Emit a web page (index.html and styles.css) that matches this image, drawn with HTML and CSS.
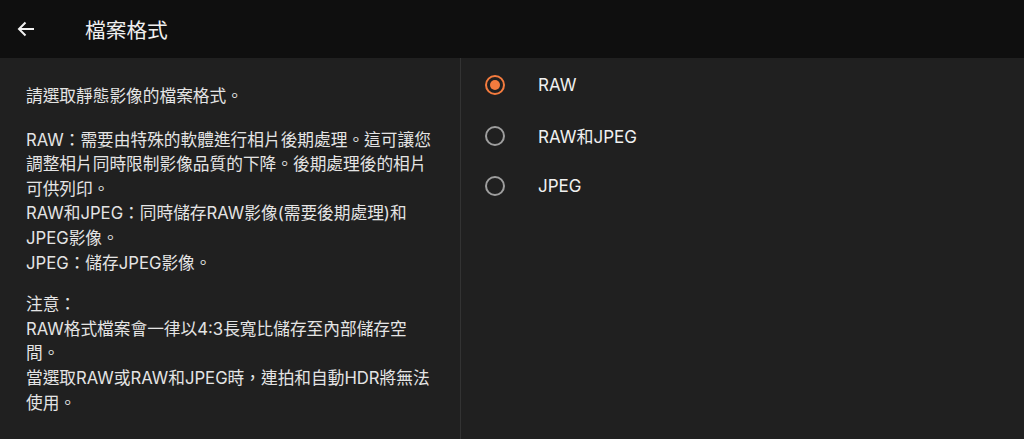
FILE: index.html
```html
<!DOCTYPE html>
<html lang="zh-Hant">
<head>
  <meta charset="UTF-8">
  <meta name="viewport" content="width=device-width, initial-scale=1.0">
  <title>檔案格式</title>
  <link rel="stylesheet" href="styles.css">
</head>
<body>

<div class="topbar">
  <button class="back" aria-label="返回">
    <svg width="20" height="20" viewBox="0 0 20 20"><path d="M18 10H3M9.5 3.5L3 10l6.5 6.5" fill="none" stroke="#f2f2f2" stroke-width="2"/></svg>
  </button>
  <h1>檔案格式</h1>
</div>

<div class="main">
  <div class="info">
    <p>請選取靜態影像的檔案格式。</p>
    <p>RAW：需要由特殊的軟體進行相片後期處理。這可讓您<br>調整相片同時限制影像品質的下降。後期處理後的相片<br>可供列印。<br>RAW和JPEG：同時儲存RAW影像(需要後期處理)和<br>JPEG影像。<br>JPEG：儲存JPEG影像。</p>
    <p>注意：<br>RAW格式檔案會一律以4:3長寬比儲存至內部儲存空<br>間。<br>當選取RAW或RAW和JPEG時，連拍和自動HDR將無法<br>使用。</p>
  </div>
  <div class="options">
    <label class="option"><span class="radio checked"></span>RAW</label>
    <label class="option"><span class="radio"></span>RAW和JPEG</label>
    <label class="option"><span class="radio"></span>JPEG</label>
  </div>
</div>

</body>
</html>
```

FILE: styles.css
```css
body { margin:0; font-family: Inter, "Noto Sans CJK TC", sans-serif; background:#202020; color:#e4e4e4; height:100vh; display:flex; flex-direction:column; }
.topbar { height:58px; background:#0f0f0f; display:flex; align-items:center; flex-shrink:0; }
.back { width:52px; height:58px; background:none; border:none; padding:0 0 0 16px; display:flex; align-items:center; cursor:pointer; }
.topbar h1 { margin:0 0 0 33px; font-size:20.7px; font-weight:400; color:#f0f0f0; }
.main { flex:1; display:flex; }
.info { width:412px; padding:26px 22px 0 26px; border-right:1px solid #333; font-size:16.7px; line-height:24.6px; white-space:nowrap; }
.info p { margin:0; }
.info p + p { margin-top:19px; }
.info p:last-child { margin-top:17px; }
.options { flex:1; padding-top:2px; }
.option { height:50.5px; display:flex; align-items:center; padding-left:24px; font-size:17px; color:#f0f0f0; cursor:pointer; }
.radio { width:16px; height:16px; border:2px solid #9e9e9e; border-radius:50%; margin-right:33px; position:relative; }
.radio.checked { border-color:#f47b3e; }
.radio.checked::after { content:""; position:absolute; left:3px; top:3px; width:10px; height:10px; border-radius:50%; background:#f47b3e; }
```
